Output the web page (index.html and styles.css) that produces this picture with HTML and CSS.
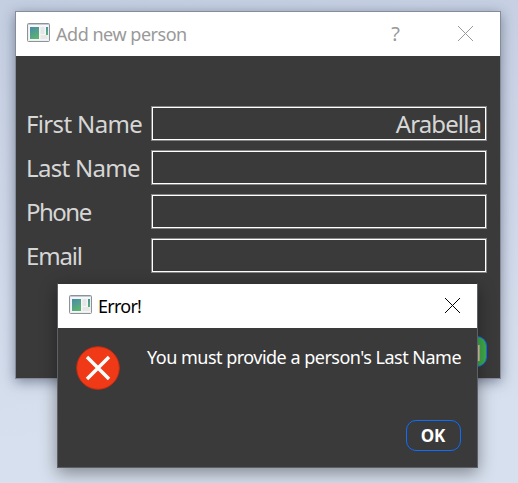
FILE: index.html
```html
<!DOCTYPE html>
<html lang="en">
<head>
<meta charset="utf-8">
<title>Add new person</title>
<link rel="stylesheet" href="styles.css">
</head>
<body>
<svg class="defs" width="0" height="0">
  <defs>
    <linearGradient id="pane" x1="0" y1="0" x2="0.5" y2="1">
      <stop offset="0" stop-color="#4889b0"/>
      <stop offset="1" stop-color="#5bb271"/>
    </linearGradient>
    <symbol id="app" viewBox="0 0 23 19">
      <rect x=".5" y=".5" width="22" height="18" rx="1" fill="#eceeef" stroke="#8b9299"/>
      <path d="M1 1.5h21" stroke="#c4cad1"/>
      <path d="M1.5 2.5h20" stroke="#f7f8f8"/>
      <rect x="2" y="3" width="19" height="14" fill="#f5f5f5"/>
      <rect x="3" y="4" width="9" height="12" fill="url(#pane)"/>
      <rect x="13.5" y="4" width="4" height="7" fill="#e4e6e7"/>
      <rect x="13.5" y="12" width="7" height="4" fill="#e7e7e7"/>
      <rect x="19" y="4" width="2" height="8" fill="url(#pane)"/>
    </symbol>
    <symbol id="close" viewBox="0 0 15 15">
      <path d="M0 0l15 15M15 0l-15 15" stroke="currentColor" fill="none"/>
    </symbol>
  </defs>
</svg>

<section class="window form-window">
  <header class="titlebar inactive">
    <svg class="app-icon"><use href="#app"/></svg>
    <h1 class="title">Add new person</h1>
    <span class="help">?</span>
    <svg class="close"><use href="#close"/></svg>
  </header>
  <form class="fields">
    <label class="label first">First Name</label><div class="input"><span>Arabella</span></div>
    <label class="label last">Last Name</label><div class="input"></div>
    <label class="label phone">Phone</label><div class="input"></div>
    <label class="label email">Email</label><div class="input"></div>
  </form>
  <div class="actions"><button class="submit" type="button">l</button></div>
</section>

<section class="window dialog">
  <header class="titlebar">
    <svg class="app-icon"><use href="#app"/></svg>
    <h1 class="title error-title">Error!</h1>
    <svg class="close"><use href="#close"/></svg>
  </header>
  <div class="message">
    <svg class="error-icon" viewBox="0 0 44 44">
      <circle cx="22" cy="22" r="21.3" fill="#f03a17" stroke="#c42b12"/>
      <path d="M11 11l22 22M33 11l-22 22" stroke="#fff" stroke-width="3.4"/>
    </svg>
    <p class="text">You must provide a person's Last Name</p>
  </div>
  <footer class="dialog-actions"><button class="ok" type="button">OK</button></footer>
</section>
</body>
</html>
```
FILE: styles.css
```css
* { box-sizing: border-box; }
body {
  margin: 0;
  width: 518px;
  height: 483px;
  overflow: hidden;
  position: relative;
  background: linear-gradient(175deg, #c5cfe2, #d7e0ee 85%);
  font-family: "Noto Sans", "Open Sans", sans-serif;
}
.defs { position: absolute; }
.window {
  position: absolute;
  display: flex;
  flex-direction: column;
  background: #3a3a3a;
  background-clip: padding-box;
}
.form-window {
  left: 15px;
  top: 11px;
  width: 486px;
  height: 368px;
  border: 1px solid #878d98;
  box-shadow: 0 3px 12px rgba(40, 50, 75, .5);
}
.dialog {
  left: 57px;
  top: 283px;
  width: 421px;
  height: 185px;
  border: 1px solid #5d6067;
  border-top-color: #333;
  box-shadow: 0 5px 16px rgba(0, 0, 0, .4);
}
.titlebar {
  display: flex;
  align-items: center;
  flex: none;
  height: 44px;
  padding: 0 17px 0 11px;
  background: #fff;
  color: #000;
}
.inactive { color: #999; padding-right: 27px; }
.app-icon { width: 23px; height: 19px; margin-top: -3px; }
.title {
  margin: 0 auto 0 6px;
  font-size: 18px;
  font-weight: 400;
  line-height: 24px;
  letter-spacing: -.47px;
  white-space: nowrap;
}
.error-title { letter-spacing: -.75px; }
.help { font-size: 20px; margin-right: 58px; line-height: 24px; }
.close { width: 15px; height: 15px; margin-top: -1px; }
.fields {
  display: grid;
  grid-template-columns: 125px 336px;
  grid-auto-rows: 35px;
  row-gap: 9px;
  margin: 50px 0 0 10px;
  color: #d6d6d6;
  font-size: 24px;
  line-height: 36px;
}
.label { white-space: nowrap; }
.first { letter-spacing: -.65px; }
.last { letter-spacing: -.7px; }
.phone { letter-spacing: -1.5px; }
.email { letter-spacing: -1.2px; }
.input {
  border: 1px solid #858585;
  box-shadow: inset 0 0 0 1px #fff;
  padding-right: 5px;
  line-height: 34px;
  letter-spacing: -.9px;
  text-align: right;
}
.actions { display: flex; justify-content: flex-end; margin: 63px 13px 0; }
.submit {
  width: 80px;
  height: 31px;
  padding: 0 5px 0 0;
  border: 1px solid #0d6efd;
  border-radius: 10px;
  background: #40ae4d;
  color: #d2d2d2;
  font: bold 22px/28px "Noto Sans", sans-serif;
  text-align: right;
}
.message { display: flex; padding: 18px 0 0 18px; }
.error-icon { width: 44px; height: 44px; flex: none; }
.text {
  margin: -1px 0 0 27px;
  color: #fff;
  font-size: 18px;
  line-height: 24px;
  letter-spacing: -.51px;
  white-space: nowrap;
}
.dialog-actions { display: flex; justify-content: flex-end; padding: 30px 16px 0; }
.ok {
  width: 55px;
  height: 31px;
  padding: 0 1px 0 0;
  border: 1px solid #0d6efd;
  border-radius: 10px;
  background: transparent;
  color: #fff;
  font: bold 17px/29px "Noto Sans", sans-serif;
}
```
